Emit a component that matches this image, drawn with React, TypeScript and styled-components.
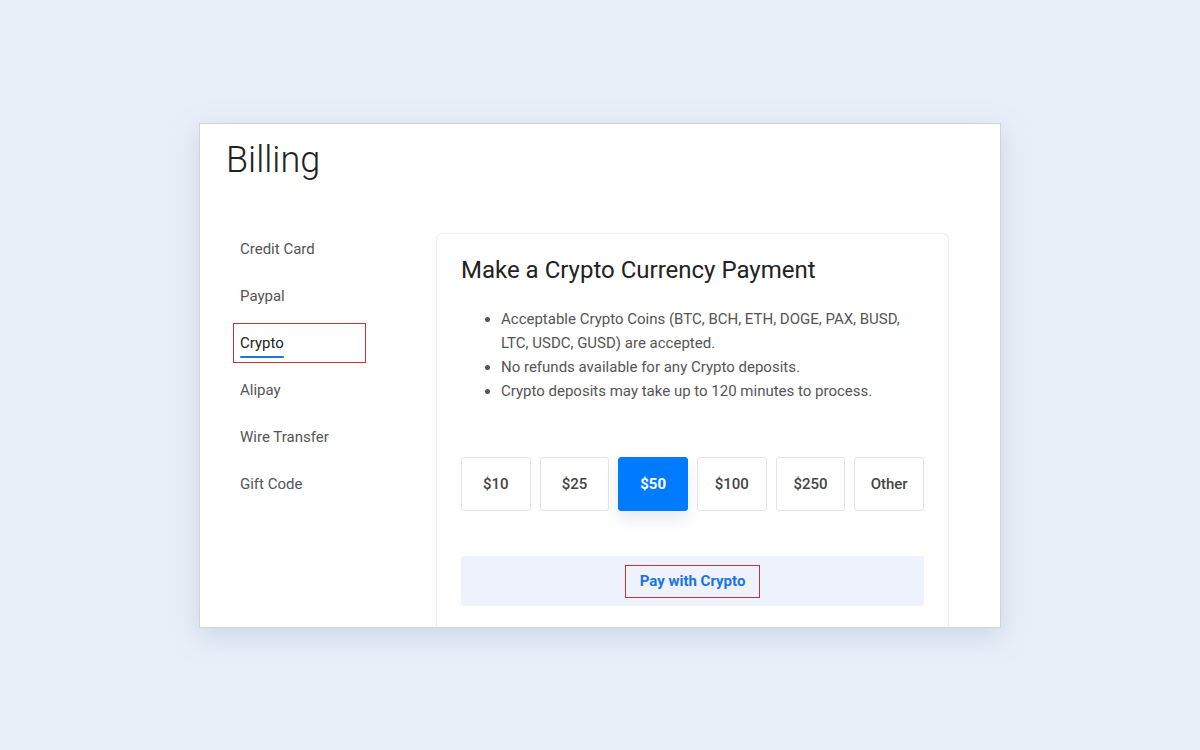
import React from "react";
import styled, { createGlobalStyle } from "styled-components";

const Global = createGlobalStyle`
  html, body { margin: 0; padding: 0; }
  body {
    background: #e9eff8;
    font-family: Roboto, "Liberation Sans", Arial, sans-serif;
    width: 1200px;
    height: 750px;
    overflow: hidden;
  }
`;

const Stage = styled.div`
  width: 1200px;
  height: 750px;
  display: flex;
  justify-content: center;
  padding-top: 123px;
  box-sizing: border-box;
`;

const Window = styled.div`
  width: 802px;
  height: 505px;
  box-sizing: border-box;
  background: #fff;
  border: 1px solid #ccd3e1;
  box-shadow: 0 8px 24px rgba(150, 165, 200, 0.35);
  overflow: hidden;
  padding: 14px 0 0 26px;
`;

const Title = styled.h1`
  margin: 0;
  font-weight: 300;
  font-size: 36px;
  line-height: 44px;
  color: #222;
`;

const Body = styled.div`
  display: flex;
  margin-top: 51px;
`;

const Nav = styled.nav`
  width: 203px;
  display: flex;
  flex-direction: column;
  gap: 7px;
  padding-left: 7px;
  margin-top: -4px;
`;

const NavItem = styled.div<{ $active?: boolean }>`
  width: 133px;
  height: 40px;
  box-sizing: border-box;
  padding-left: 6px;
  display: flex;
  align-items: center;
  font-size: 15px;
  color: ${(p) => (p.$active ? "#222" : "#555")};
  border: 1px solid ${(p) => (p.$active ? "#c4323a" : "transparent")};
`;

const NavLabel = styled.span<{ $active?: boolean }>`
  position: relative;
  &::after {
    content: "";
    display: ${(p) => (p.$active ? "block" : "none")};
    position: absolute;
    left: 0;
    right: 0;
    bottom: -6px;
    height: 2.5px;
    border-radius: 2px;
    background: #1b7ad6;
  }
`;

const Card = styled.section`
  width: 513px;
  box-sizing: border-box;
  border: 1px solid #ececec;
  border-radius: 6px;
  padding: 20px 24px 30px 24px;
  background: #fff;
`;

const CardTitle = styled.h2`
  margin: 0;
  font-weight: 400;
  font-size: 24px;
  line-height: 32px;
  color: #222;
`;

const List = styled.ul`
  margin: 21px 0 0 0;
  padding-left: 40px;
  font-size: 15px;
  line-height: 24px;
  color: #555;
`;

const Amounts = styled.div`
  display: grid;
  grid-template-columns: repeat(6, 1fr);
  gap: 9px;
  margin-top: 54px;
`;

const Amount = styled.button<{ $active?: boolean }>`
  appearance: none;
  outline: none;
  height: 54px;
  border-radius: 3px;
  font-family: inherit;
  font-size: 15px;
  font-weight: ${(p) => (p.$active ? 700 : 500)};
  color: ${(p) => (p.$active ? "#fff" : "#444")};
  background: ${(p) => (p.$active ? "#007bff" : "#fff")};
  border: 1px solid ${(p) => (p.$active ? "#007bff" : "#e4e4e4")};
  box-shadow: ${(p) => (p.$active ? "0 8px 16px rgba(0, 40, 100, 0.1)" : "none")};
  padding: 0;
`;

const PayBar = styled.div`
  margin-top: 45px;
  height: 50px;
  border-radius: 3px;
  background: #edf2fd;
  display: flex;
  align-items: center;
  justify-content: center;
`;

const PayButton = styled.button`
  appearance: none;
  outline: none;
  height: 33px;
  padding: 0 14px;
  border: 1px solid #c4323a;
  border-radius: 0;
  background: transparent;
  font-family: inherit;
  font-size: 15px;
  font-weight: 700;
  color: #1a73e8;
`;

const navItems = ["Credit Card", "Paypal", "Crypto", "Alipay", "Wire Transfer", "Gift Code"];
const amounts = ["$10", "$25", "$50", "$100", "$250", "Other"];

export default function App() {
  return (
    <>
      <Global />
      <Stage>
        <Window>
          <Title>Billing</Title>
          <Body>
            <Nav>
              {navItems.map((n) => (
                <NavItem key={n} $active={n === "Crypto"}>
                  <NavLabel $active={n === "Crypto"}>{n}</NavLabel>
                </NavItem>
              ))}
            </Nav>
            <Card>
              <CardTitle>Make a Crypto Currency Payment</CardTitle>
              <List>
                <li>Acceptable Crypto Coins (BTC, BCH, ETH, DOGE, PAX, BUSD, LTC, USDC, GUSD) are accepted.</li>
                <li>No refunds available for any Crypto deposits.</li>
                <li>Crypto deposits may take up to 120 minutes to process.</li>
              </List>
              <Amounts>
                {amounts.map((a) => (
                  <Amount key={a} $active={a === "$50"}>
                    {a}
                  </Amount>
                ))}
              </Amounts>
              <PayBar>
                <PayButton>Pay with Crypto</PayButton>
              </PayBar>
            </Card>
          </Body>
        </Window>
      </Stage>
    </>
  );
}
